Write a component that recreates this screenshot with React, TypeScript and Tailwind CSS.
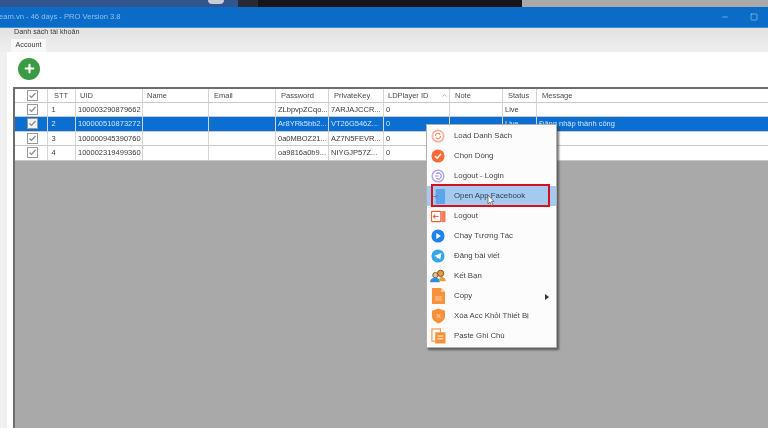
import { ReactNode } from "react";
import { ChevronUp, Minus, Plus, Square } from "lucide-react";

const rows = [
  { stt: "1", uid: "100003290879662", pass: "ZLbpvpZCqo...", key: "7ARJAJCCR...", status: "Live", msg: "" },
  { stt: "2", uid: "100000510873272", pass: "Ar8YRk5bb2...", key: "VT26G546Z...", status: "Live", msg: "Đăng nhập thành công" },
  { stt: "3", uid: "100000945390760", pass: "0a0MBOZ21...", key: "AZ7N5FEVR...", status: "", msg: "" },
  { stt: "4", uid: "100002319499360", pass: "oa9816a0b9...", key: "NIYGJP57Z...", status: "", msg: "" },
];

// Cột da grade, mesma largura no cabeçalho e nas linhas.
const cols = "grid grid-cols-[33px_28px_67px_66px_67px_53px_55px_66px_53px_34px_1fr]";

function Check({ on }: { on?: boolean }) {
  return (
    <svg width="11" height="11" viewBox="0 0 11 11" className="mx-auto">
      <rect x="0.5" y="0.5" width="10" height="10" fill={on ? "#eef2f6" : "#fff"} stroke="#999" />
      <path d="M2.500 5.500l2 2 4-4.500" fill="none" stroke="#888" strokeWidth="1.2" />
    </svg>
  );
}

function Cell({ children, line = true, pad = "pl-[2px]" }: { children?: ReactNode; line?: boolean; pad?: string }) {
  return (
    <div className={`flex items-center overflow-hidden whitespace-nowrap ${pad} ${line ? "border-r border-[#d4d4d4]" : ""}`}>
      {children}
    </div>
  );
}

function Row({ r, selected }: { r: (typeof rows)[number]; selected: boolean }) {
  return (
    <div className={`${cols} h-[14.5px] border-b border-[#c9c9c9] text-[7.5px] ${selected ? "bg-[#0a6fd0] text-[#cfe4f8]" : "bg-white text-[#3a3a3a]"}`}>
      <Cell><Check on={selected} /></Cell>
      <Cell pad="pl-[3.5px]">{r.stt}</Cell>
      <Cell>{r.uid}</Cell>
      <Cell />
      <Cell />
      <Cell>{r.pass}</Cell>
      <Cell>{r.key}</Cell>
      <Cell>0</Cell>
      <Cell />
      <Cell>{r.status}</Cell>
      <Cell line={false}>{r.msg}</Cell>
    </div>
  );
}

function Ring({ color, children }: { color: string; children?: ReactNode }) {
  return (
    <svg width="14" height="14" viewBox="0 0 16 16">
      <circle cx="8" cy="8" r="7.5" fill={color} />
      {children}
    </svg>
  );
}

const menu: { label: string; icon: ReactNode; arrow?: boolean; active?: boolean }[] = [
  {
    label: "Load Danh Sách",
    icon: (
      <Ring color="#fbb39c">
        <circle cx="8" cy="8" r="5.5" fill="#fff" />
        <path d="M5 8a3 3 0 0 1 5.5-1.600M11 8a3 3 0 0 1-5.500 1.600" fill="none" stroke="#f58a68" strokeWidth="1.2" />
      </Ring>
    ),
  },
  {
    label: "Chọn Dòng",
    icon: (
      <Ring color="#fb6a35">
        <path d="M4.500 8l2.500 2.500 4.500-5" fill="none" stroke="#fff" strokeWidth="1.8" />
      </Ring>
    ),
  },
  {
    label: "Logout - Login",
    icon: (
      <Ring color="#b9a5ee">
        <circle cx="8" cy="8" r="5.800" fill="#fff" />
        <path d="M6 5.500a3.400 3.400 0 1 1 0 5M4.500 8h4" fill="none" stroke="#9d8ae0" strokeWidth="1.2" />
      </Ring>
    ),
  },
  {
    label: "Open App Facebook",
    active: true,
    icon: (
      <svg width="15" height="15" viewBox="0 0 16 16">
        <rect x="5" y="0" width="10" height="16" fill="#5da4ea" />
        <path d="M0 8h7M5 6l2 2-2 2" fill="none" stroke="#6c89a8" strokeWidth="1.1" />
      </svg>
    ),
  },
  {
    label: "Logout",
    icon: (
      <svg width="15" height="15" viewBox="0 0 16 16">
        <rect x="0.500" y="2.500" width="10" height="11" rx="1" fill="#fff" stroke="#f2613c" strokeWidth="1.3" />
        <rect x="11" y="2" width="4.500" height="12" rx="1" fill="#f47d5c" />
        <path d="M8 8H2.500M4.500 6L2.500 8l2 2" fill="none" stroke="#f2613c" strokeWidth="1.2" />
      </svg>
    ),
  },
  {
    label: "Chạy Tương Tác",
    icon: (
      <Ring color="#1f83ea">
        <path d="M6 4.500v7l5.500-3.500z" fill="#fff" />
      </Ring>
    ),
  },
  {
    label: "Đăng bài viết",
    icon: (
      <Ring color="#34a6e6">
        <path d="M3.500 8l8.500-3.500-1.500 7.500-2.500-2-1.200 1.200-.3-2.400z" fill="#fff" />
      </Ring>
    ),
  },
  {
    label: "Kết Bạn",
    icon: (
      <svg width="16" height="14" viewBox="0 0 18 16">
        <circle cx="12" cy="5" r="3.600" fill="#e59a3c" stroke="#6b4a20" />
        <circle cx="6" cy="7" r="3" fill="#f2c08c" stroke="#5a4a40" />
        <path d="M0 15c0-4 3-5 6-5s5 1 5 5z" fill="#2e8fe0" />
        <path d="M10 14c0-3 1-5 3-5s5 1 5 5z" fill="#e8a040" />
      </svg>
    ),
  },
  {
    label: "Copy",
    arrow: true,
    icon: (
      <svg width="15" height="16" viewBox="0 0 15 16">
        <path d="M1 0h9l4 4v12H1z" fill="#f7923a" />
        <path d="M10 0l4 4h-4z" fill="#fbc794" />
        <rect x="4" y="8" width="7" height="5" fill="#fbb069" />
      </svg>
    ),
  },
  {
    label: "Xóa Acc Khỏi Thiết Bị",
    icon: (
      <svg width="15" height="16" viewBox="0 0 16 16">
        <path d="M8 0l7 2.500V8c0 4-3.500 6.500-7 8-3.500-1.500-7-4-7-8V2.500z" fill="#f7923a" />
        <path d="M6 6l4 4M10 6l-4 4" stroke="#fbc794" strokeWidth="1.3" />
      </svg>
    ),
  },
  {
    label: "Paste Ghi Chú",
    icon: (
      <svg width="15" height="16" viewBox="0 0 16 16">
        <rect x="1" y="0.500" width="9" height="13" fill="#fff" stroke="#f7923a" strokeWidth="1.2" />
        <rect x="4.500" y="4" width="11" height="12" fill="#f7923a" />
        <path d="M7 8h6M7 11h6" stroke="#fff" />
      </svg>
    ),
  },
];

function ContextMenu() {
  return (
    <div className="absolute left-[426px] top-[124px] w-[131px] border border-[#b0b0b0] bg-[#fdfcfd] py-[1px] text-[7.8px] text-[#444] shadow-[2px_2px_2px_rgba(60,60,60,0.7)]">
      {menu.map((m) => (
        <div key={m.label} className={`relative flex h-[20px] items-center ${m.active ? "bg-[#a4cbef] text-[#2c3e55]" : ""}`}>
          <span className="flex w-[22px] shrink-0 justify-center">{m.icon}</span>
          <span className="ml-[5px]">{m.label}</span>
          {m.arrow && <span className="absolute right-[7px] top-[7.5px] border-y-[3px] border-l-[4px] border-y-transparent border-l-[#333]" />}
          {m.active && <span className="absolute -top-[2px] left-[4px] h-[23px] w-[119px] border-2 border-[#d8101c]" />}
          {m.active && (
            <svg width="9" height="12" viewBox="0 0 9 12" className="absolute left-[60px] top-[9px]">
              <path d="M1 0v9l2-2 1.500 3.500 1.500-.5L4.500 6.500H7z" fill="#fff" stroke="#555" strokeWidth="0.7" />
            </svg>
          )}
        </div>
      ))}
    </div>
  );
}

export default function App() {
  return (
    <div className="relative flex h-[428px] w-[768px] flex-col overflow-hidden bg-[#a9a9a9] font-['Liberation_Sans',sans-serif] blur-[0.4px]">
      {/* Faixa de cima: resto da tela atrás da janela */}
      <div className="flex h-[7px] shrink-0">
        <div className="relative w-[238px] overflow-hidden bg-[#31558f]">
          <div className="absolute left-[208px] -top-[4px] h-[8px] w-[16px] rounded-full bg-[#c8ced8]" />
        </div>
        <div className="w-[20px] bg-[#2a2a35]" />
        <div className="w-[264px] bg-[#15151b]" />
        <div className="flex-1 bg-[#a9a9a9]" />
      </div>

      <div className="flex h-[21px] shrink-0 items-center justify-between border-b border-[#3f8fd6] bg-[#0a6cc6] pr-[10px] text-[7.6px] text-[#8fc0ee]">
        <span className="-ml-[1px]">eam.vn - 46 days - PRO Version 3.8</span>
        <div className="flex items-center gap-[21px] text-[#9cc6ee]">
          <Minus size={8} />
          <Square size={8} />
        </div>
      </div>

      <div className="flex h-[24px] shrink-0 flex-col bg-gradient-to-b from-[#e2e2e2] to-[#efefef] pl-[14px] text-[7.2px] text-[#3a3a3a]">
        <span className="leading-[8px]">Danh sách tài khoản</span>
        <span className="-ml-[3px] mt-[3px] flex h-[13px] w-[35px] items-center justify-center bg-[#f8f8f8]">Account</span>
      </div>

      <div className="flex min-h-0 flex-1">
        <div className="w-[7px] shrink-0 bg-[#f0f0f0]" />
        <div className="flex min-w-0 flex-1 flex-col bg-white">
          <div className="flex h-[35px] shrink-0 items-center pb-[2px] pl-[11px]">
            <span className="flex h-[22px] w-[22px] items-center justify-center rounded-full bg-[#3b9b44] text-white">
              <Plus size={13} strokeWidth={4} />
            </span>
          </div>
          <div className="ml-[6px] flex min-h-0 flex-1 flex-col border-l-2 border-t-2 border-[#6d6d6d] bg-[#a9a9a9]">
            <div className={`${cols} h-[13.5px] border-b border-[#c9c9c9] bg-white text-[7.5px] text-[#4a4a4a]`}>
              <Cell><Check /></Cell>
              <Cell pad="pl-[6px]">STT</Cell>
              <Cell pad="pl-[4px]">UID</Cell>
              <Cell pad="pl-[4px]">Name</Cell>
              <Cell pad="pl-[5px]">Email</Cell>
              <Cell pad="pl-[5px]">Password</Cell>
              <Cell pad="pl-[5px]">PrivateKey</Cell>
              <Cell pad="pl-[4px]">
                <span className="flex w-full items-center justify-between pr-[1px]">
                  LDPlayer ID
                  <ChevronUp size={7} className="text-[#888]" />
                </span>
              </Cell>
              <Cell pad="pl-[5px]">Note</Cell>
              <Cell pad="pl-[5px]">Status</Cell>
              <Cell line={false} pad="pl-[5px]">Message</Cell>
            </div>
            {rows.map((r, i) => (
              <Row key={r.stt} r={r} selected={i === 1} />
            ))}
          </div>
        </div>
      </div>

      <ContextMenu />
    </div>
  );
}
